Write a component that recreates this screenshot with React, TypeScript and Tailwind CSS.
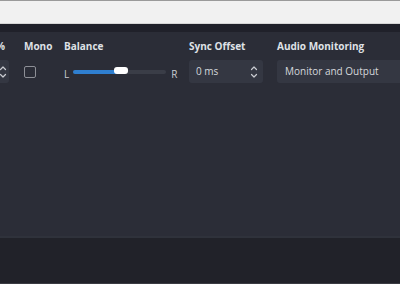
import React from "react";

const font = { fontFamily: '"Open Sans", "Noto Sans", sans-serif' };

function Chevrons() {
  return (
    <svg width="8" height="14" viewBox="0 0 8 14" fill="none" stroke="#c9cbd1" strokeWidth="1.2" strokeLinecap="round" strokeLinejoin="round">
      <path d="M1.5 4.5 L4 2 L6.5 4.5" />
      <path d="M1.5 9.5 L4 12 L6.5 9.5" />
    </svg>
  );
}

export default function App() {
  return (
    <div className="w-[400px] h-[284px] overflow-hidden flex flex-col bg-[#212229]" style={font}>
      <div className="h-[24px] shrink-0 bg-[#f1f1f1] border-t border-t-[#9a9a9a] border-b border-b-[#d6d6d6]" />
      <div className="h-[8px] shrink-0 bg-[#20212a]" />
      <div className="h-[206px] shrink-0 bg-[#2b2d37] border-b-2 border-b-[#2f323b] overflow-hidden">
        <div className="flex items-start pt-[7px] -ml-[40px] w-[600px]">
          {/* clipped volume column */}
          <div className="w-[64px] shrink-0 flex flex-col">
            <div className="w-[45px] h-[14px] text-[10px] font-bold leading-[14px] text-[#dfe1e6] text-right">%</div>
            <div className="mt-[7px] h-[23px] w-[49px] rounded-[3px] bg-[#343742] flex items-center justify-end pr-[2px]">
              <Chevrons />
            </div>
          </div>
          {/* Mono */}
          <div className="w-[40px] shrink-0 flex flex-col">
            <div className="h-[14px] text-[10px] font-bold leading-[14px] text-[#dfe1e6]">Mono</div>
            <div className="mt-[7px] h-[23px] flex items-center">
              <div className="w-[12px] h-[12px] rounded-[2px] border border-[#8d8f96]" />
            </div>
          </div>
          {/* Balance */}
          <div className="w-[125px] shrink-0 flex flex-col">
            <div className="h-[14px] text-[10px] font-bold leading-[14px] text-[#dfe1e6]">Balance</div>
            <div className="mt-[7px] h-[23px] flex items-center gap-[4px] text-[10px] text-[#c9cbd1]">
              <span className="leading-none mt-[4px]">L</span>
              <div className="relative w-[93px] h-[4px] rounded-full bg-[#3a3d47]">
                <div className="absolute left-0 top-0 h-[4px] w-[45px] rounded-full bg-[#2f7fd0]" />
                <div className="absolute left-[41px] top-[-3px] w-[14px] h-[7px] rounded-[3px] bg-white" />
              </div>
              <span className="leading-none mt-[4px] ml-[1px]">R</span>
            </div>
          </div>
          {/* Sync Offset */}
          <div className="w-[88px] shrink-0 flex flex-col">
            <div className="h-[14px] text-[10px] font-bold leading-[14px] text-[#dfe1e6]">Sync Offset</div>
            <div className="mt-[7px] h-[23px] w-[74px] rounded-[3px] bg-[#343742] flex items-center justify-between pl-[7px] pr-[5px] text-[10px] text-[#d5d7dc]">
              <span>0 ms</span>
              <Chevrons />
            </div>
          </div>
          {/* Audio Monitoring */}
          <div className="w-[140px] shrink-0 flex flex-col">
            <div className="h-[14px] text-[10px] font-bold leading-[14px] text-[#dfe1e6] whitespace-nowrap">Audio Monitoring</div>
            <div className="mt-[7px] h-[23px] w-[140px] rounded-l-[3px] bg-[#343742] flex items-center pl-[8px] text-[10px] text-[#d5d7dc] whitespace-nowrap">
              Monitor and Output
            </div>
          </div>
        </div>
      </div>
      <div className="flex-1" />
      <div className="h-[1px] shrink-0 bg-[#3a3b42]" />
    </div>
  );
}
